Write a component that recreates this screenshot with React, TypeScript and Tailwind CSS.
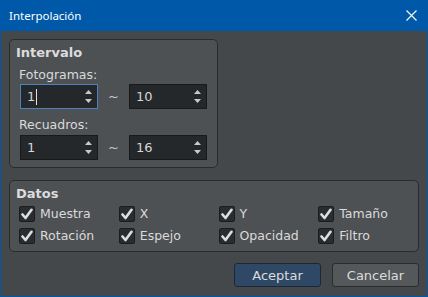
import React from "react";

const Spin = ({ value, focused }: { value: string; focused?: boolean }) => (
  <div
    className={
      "w-[78px] h-[25px] flex items-center justify-between pl-[6px] pr-[5px] bg-[#25282b] border " +
      (focused ? "border-[#4f82bd]" : "border-[#18191a]")
    }
  >
    <div className="flex items-center text-[#d6d6d6] text-[13px] leading-none">
      <span>{value}</span>
      {focused && <span className="inline-block w-[1px] h-[16px] bg-[#e0e0e0] ml-[1px]" />}
    </div>
    <div className="flex flex-col items-center gap-[5px]">
      <svg width="7" height="4" viewBox="0 0 7 4">
        <path d="M0 4 L3.5 0 L7 4 Z" fill="#c9c9c9" />
      </svg>
      <svg width="7" height="4" viewBox="0 0 7 4">
        <path d="M0 0 L3.5 4 L7 0 Z" fill="#c9c9c9" />
      </svg>
    </div>
  </div>
);

const Check = ({ label }: { label: string }) => (
  <div className="w-[100px] flex items-center gap-[5px]">
    <div className="w-[16px] h-[16px] rounded-[2px] bg-[#2a2d30] border border-[#1b1c1e] flex items-center justify-center">
      <svg width="12" height="12" viewBox="0 0 12 12">
        <path d="M1.5 6.5 L4.5 10 L10.5 1.8" fill="none" stroke="#dedede" strokeWidth="2.6" strokeLinecap="round" strokeLinejoin="round" />
      </svg>
    </div>
    <span className="text-[12.5px] text-[#dadada] leading-none">{label}</span>
  </div>
);

export default function App() {
  return (
    <div
      className="w-[428px] h-[297px] bg-[#0059a8] flex flex-col"
      style={{ fontFamily: '"DejaVu Sans", sans-serif' }}
    >
      <div className="h-[31px] flex items-center justify-between pl-[9px] pr-[11px]">
        <span className="text-white text-[11.5px]" style={{ fontFamily: '"Noto Sans", sans-serif' }}>
          Interpolación
        </span>
        <svg width="11" height="11" viewBox="0 0 11 11">
          <path d="M0.5 0.5 L10.5 10.5 M10.5 0.5 L0.5 10.5" stroke="#ffffff" strokeWidth="1.1" />
        </svg>
      </div>
      <div className="flex-1 mx-[1px] mb-[1px] bg-[#45484b] flex flex-col pt-[8px] pl-[8px] pr-[8px]">
        <div className="w-[209px] h-[129px] border border-[#2a2b2d] rounded-[5px] bg-[#4e5154] flex flex-col pl-[10px]">
          <div className="mt-[5px] -ml-[4px] text-[13px] font-bold text-[#dcdcdc] leading-[16px]">Intervalo</div>
          <div className="mt-[6px] -ml-[1px] text-[12.5px] text-[#dadada] leading-[16px]">Fotogramas:</div>
          <div className="mt-[1px] flex items-center">
            <Spin value="1" focused />
            <span className="w-[31px] text-center text-[#c8c8c8] text-[13px]">~</span>
            <Spin value="10" />
          </div>
          <div className="mt-[8px] -ml-[1px] text-[12.5px] text-[#dadada] leading-[16px]">Recuadros:</div>
          <div className="mt-[2px] flex items-center">
            <Spin value="1" />
            <span className="w-[31px] text-center text-[#c8c8c8] text-[13px]">~</span>
            <Spin value="16" />
          </div>
        </div>
        <div className="mt-[12px] w-[410px] h-[72px] border border-[#2a2b2d] rounded-[5px] bg-[#4e5154] flex flex-col pl-[9px]">
          <div className="mt-[5px] -ml-[3px] text-[13px] font-bold text-[#dcdcdc] leading-[16px]">Datos</div>
          <div className="mt-[4px] flex">
            <Check label="Muestra" />
            <Check label="X" />
            <Check label="Y" />
            <Check label="Tamaño" />
          </div>
          <div className="mt-[6px] flex">
            <Check label="Rotación" />
            <Check label="Espejo" />
            <Check label="Opacidad" />
            <Check label="Filtro" />
          </div>
        </div>
        <div className="mt-[11px] flex justify-end gap-[11px]">
          <button className="w-[87px] h-[24px] rounded-[3px] border border-[#1d2733] bg-[#2f4866] text-[#dcdcdc] text-[13px] leading-none">
            Aceptar
          </button>
          <button className="w-[87px] h-[24px] rounded-[3px] border border-[#2a2b2d] bg-[#55585b] text-[#dcdcdc] text-[13px] leading-none">
            Cancelar
          </button>
        </div>
      </div>
    </div>
  );
}
